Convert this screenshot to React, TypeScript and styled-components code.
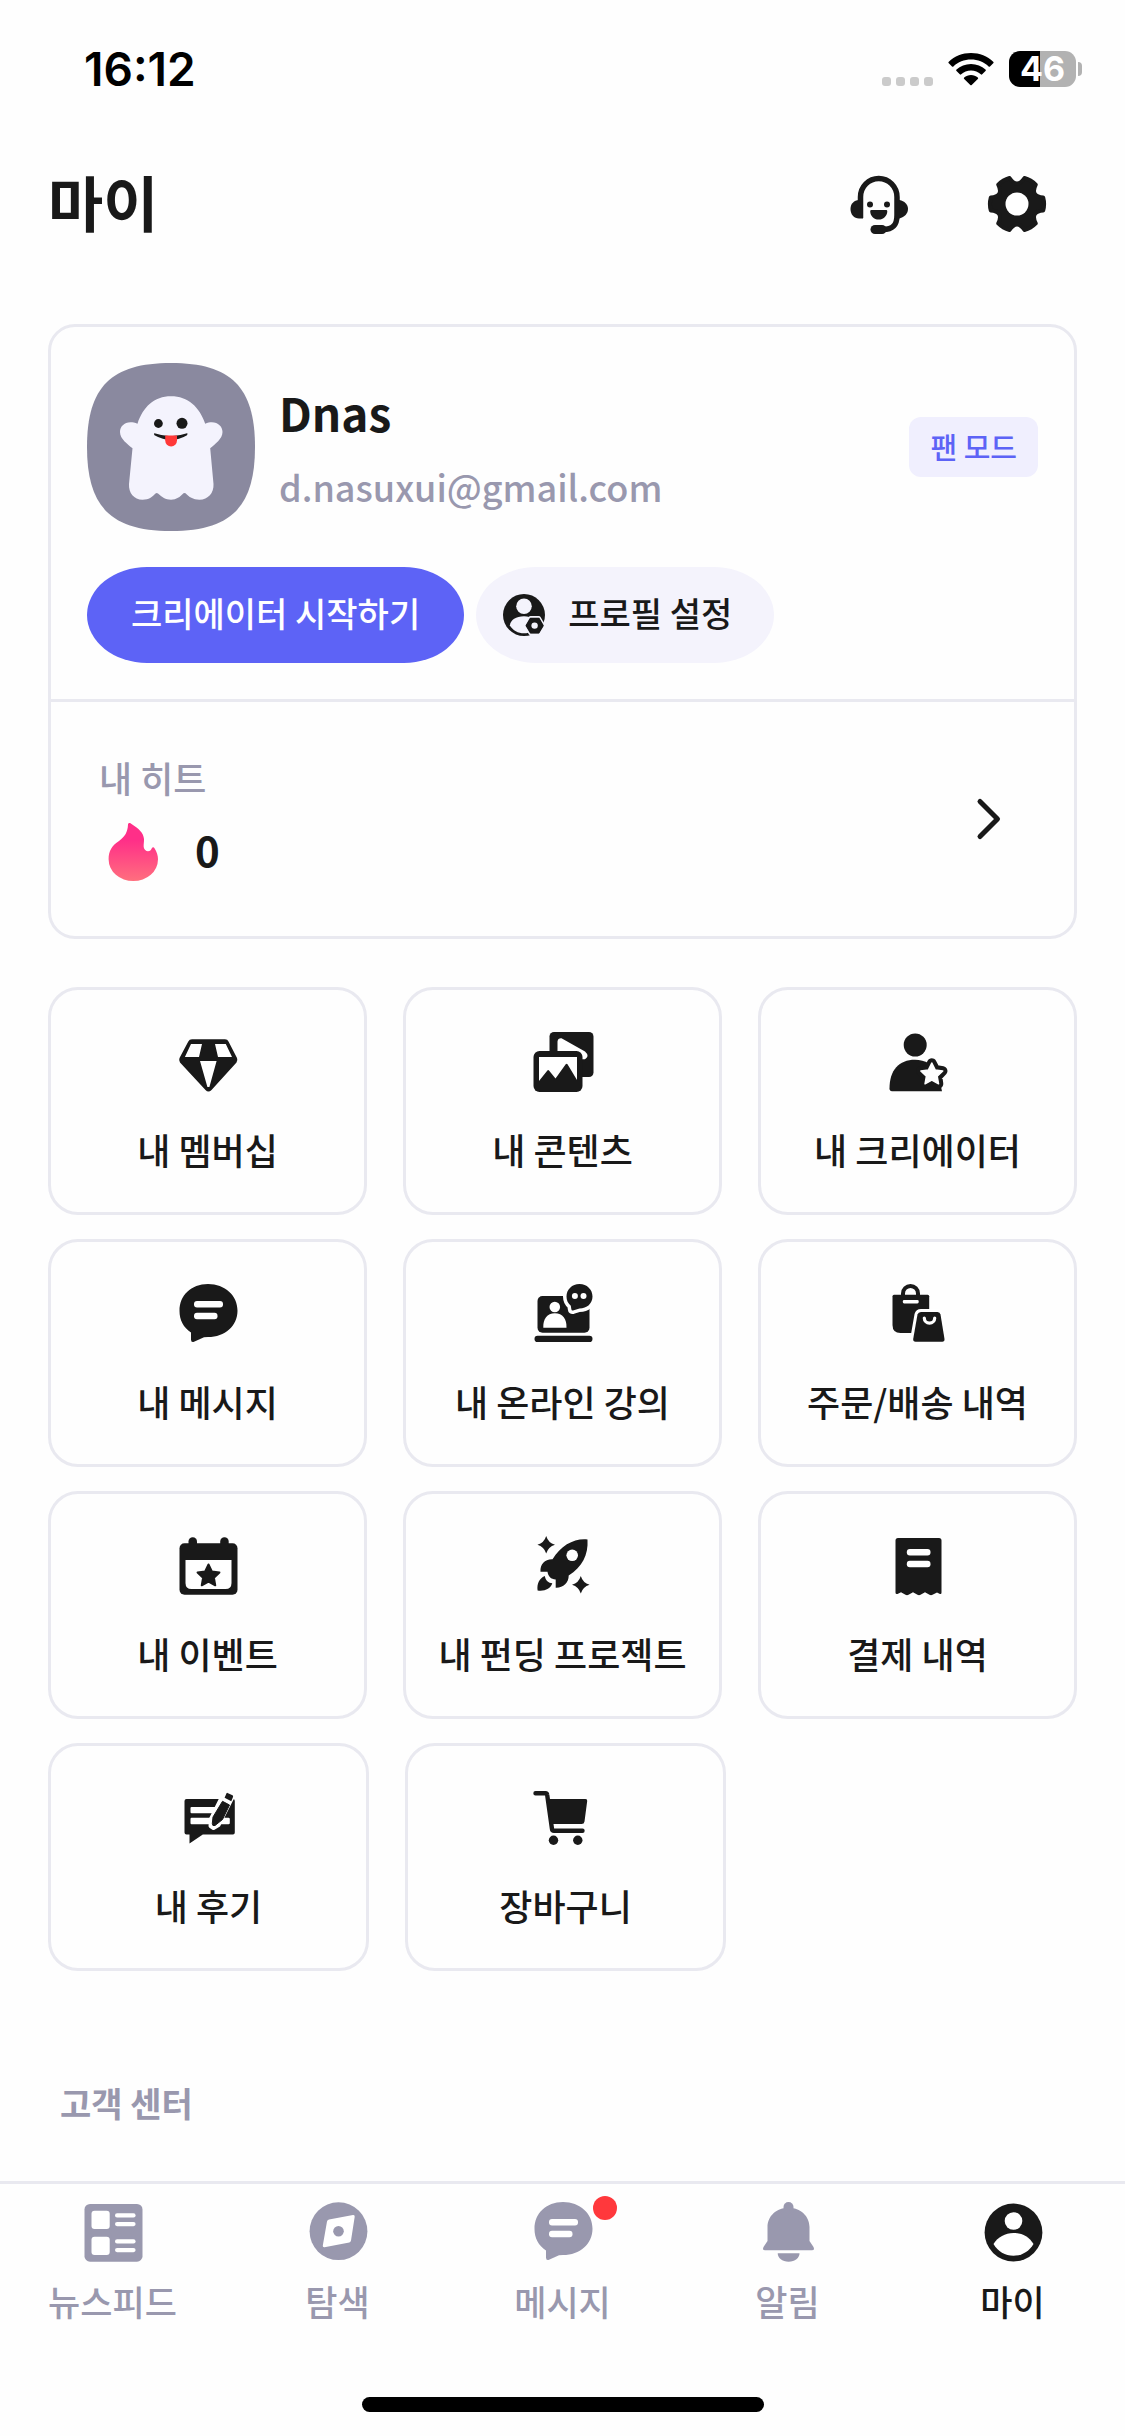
import React from "react";
import styled, { createGlobalStyle } from "styled-components";

const ink = "#191919";
const muted = "#9998AE";
const line = "#E9E9F0";
const primary = "#5D63F6";

const GlobalStyle = createGlobalStyle`
  *, *::before, *::after { box-sizing: border-box; }
  body {
    margin: 0;
    background: #FEFEFE;
    color: ${ink};
    font-family: "Noto Sans CJK KR", "Noto Sans", sans-serif;
    font-weight: 500;
    -webkit-font-smoothing: antialiased;
  }
  h1, h2, p { margin: 0; }
  button { font: inherit; color: inherit; border: 0; background: none; padding: 0; cursor: pointer; }
  a { color: inherit; text-decoration: none; }
  svg { display: block; flex: none; }
`;

/* ---------- layout ---------- */

const Page = styled.div`
  min-height: 100vh;
  display: flex;
  flex-direction: column;
`;

const StatusBar = styled.div`
  display: flex;
  align-items: center;
  justify-content: space-between;
  height: 132px;
  padding: 6px 43px 0 84px;
  color: #000;
  font-family: Inter, sans-serif;
`;

const Clock = styled.time`
  font-size: 46px;
  font-weight: 600;
  line-height: 54px;
`;

const StatusIcons = styled.div`
  display: flex;
  align-items: center;
  gap: 15px;
`;

const SignalDots = styled.div`
  display: flex;
  gap: 5px;
  padding-top: 24px;
  span {
    width: 9px;
    height: 9px;
    border-radius: 3px;
    background: #CBCBCB;
  }
`;

const Battery = styled.div`
  display: flex;
  align-items: center;
  gap: 2px;
  &::after {
    content: "";
    width: 4px;
    height: 14px;
    border-radius: 0 4px 4px 0;
    background: #B2B2B2;
  }
`;

const BatteryLevel = styled.span`
  width: 67px;
  height: 36px;
  border-radius: 11px;
  background: linear-gradient(90deg, #000 46%, #B2B2B2 46%);
  color: #fff;
  font-size: 34px;
  font-weight: 700;
  line-height: 36px;
  text-align: center;
`;

const Header = styled.header`
  display: flex;
  align-items: center;
  justify-content: space-between;
  height: 144px;
  padding: 0 72px 0 48px;
`;

const Title = styled.h1`
  padding-bottom: 6px;
  font-size: 60px;
  font-weight: 700;
  line-height: 84px;
`;

const HeaderActions = styled.div`
  display: flex;
  gap: 66px;
`;

const Main = styled.main`
  flex: 1;
  padding: 48px 48px 53px;
`;

const ProfileCard = styled.section`
  border: 3px solid ${line};
  border-radius: 27px;
`;

const ProfileTop = styled.div`
  display: flex;
  flex-direction: column;
  gap: 36px;
  padding: 36px;
  border-bottom: 3px solid ${line};
`;

const Identity = styled.div`
  display: flex;
  align-items: center;
  gap: 24px;
`;

const NameBlock = styled.div`
  flex: 1;
  min-width: 0;
  padding-bottom: 2px;
`;

const Name = styled.h2`
  font-size: 46px;
  font-weight: 700;
  line-height: 72px;
`;

const Email = styled.p`
  margin-top: 8px;
  color: ${muted};
  font-size: 36px;
  line-height: 60px;
`;

const Badge = styled.span`
  padding: 5px 21px 7px;
  border-radius: 12px;
  background: #F0EFFE;
  color: ${primary};
  font-size: 29px;
  line-height: 48px;
`;

const Actions = styled.div`
  display: flex;
  gap: 12px;
`;

const Pill = styled.button<{ $filled?: boolean }>`
  display: flex;
  align-items: center;
  gap: 20px;
  height: 96px;
  padding: 0 ${(p) => (p.$filled ? 44 : 42)}px 0 ${(p) => (p.$filled ? 44 : 24)}px;
  border-radius: 60px / 48px;
  background: ${(p) => (p.$filled ? primary : "#F4F3FC")};
  color: ${(p) => (p.$filled ? "#fff" : ink)};
  font-size: 34px;
  line-height: 48px;
`;

const PillLabel = styled.span`
  padding-bottom: 4px;
`;

const HeatRow = styled.a`
  display: flex;
  align-items: center;
  justify-content: space-between;
  height: 234px;
  padding: 0 63px 0 48px;
`;

const HeatLabel = styled.p`
  color: ${muted};
  font-size: 36px;
  line-height: 54px;
`;

const HeatValue = styled.p`
  display: flex;
  align-items: center;
  gap: 24px;
  margin-top: 12px;
  font-size: 42px;
  font-weight: 700;
  line-height: 66px;
  span { padding-bottom: 6px; }
`;

const Menu = styled.nav`
  display: flex;
  flex-direction: column;
  gap: 24px;
  margin-top: 48px;
`;

const MenuRow = styled.div`
  display: flex;
  gap: 36px;
`;

const Tile = styled.a<{ $share?: string }>`
  flex: ${(p) => (p.$share ? `0 0 ${p.$share}` : "1 1 0")};
  display: flex;
  flex-direction: column;
  align-items: center;
  gap: 24px;
  height: 228px;
  padding-top: 36px;
  border: 3px solid ${line};
  border-radius: 30px;
  font-size: 36px;
  line-height: 54px;
  white-space: nowrap;
`;

const SectionTitle = styled.h2`
  margin-top: 108px;
  padding-left: 12px;
  color: ${muted};
  font-size: 34px;
  font-weight: 700;
  line-height: 48px;
`;

const TabBar = styled.footer`
  border-top: 3px solid ${line};
  padding: 12px 0 24px;
`;

const Tabs = styled.nav`
  display: flex;
`;

const Tab = styled.a<{ $active?: boolean }>`
  flex: 1 1 0;
  display: flex;
  flex-direction: column;
  align-items: center;
  gap: 6px;
  color: ${(p) => (p.$active ? ink : muted)};
  font-size: 35px;
  line-height: 54px;
`;

const TabIcon = styled.span`
  position: relative;
`;

const UnreadDot = styled.span`
  position: absolute;
  top: 0;
  right: -18px;
  width: 24px;
  height: 24px;
  border-radius: 50%;
  background: #FF383C;
`;

const HomeIndicator = styled.div`
  width: 402px;
  height: 15px;
  margin: 69px auto 0;
  border-radius: 8px;
  background: #000;
`;

/* ---------- drawings ---------- */

const polar = (cx: number, cy: number, r: number, deg: number) => {
  const a = (deg * Math.PI) / 180;
  return `${(cx + r * Math.cos(a)).toFixed(2)} ${(cy + r * Math.sin(a)).toFixed(2)}`;
};

const star = (cx: number, cy: number, outer: number, inner: number) =>
  "M" +
  Array.from({ length: 10 }, (_, i) => polar(cx, cy, i % 2 ? inner : outer, -90 + i * 36)).join("L") +
  "Z";

const sparkle = (cx: number, cy: number, r: number) =>
  `M${cx} ${cy - r}Q${cx + 2} ${cy - 2} ${cx + r} ${cy}Q${cx + 2} ${cy + 2} ${cx} ${cy + r}Q${cx - 2} ${cy + 2} ${cx - r} ${cy}Q${cx - 2} ${cy - 2} ${cx} ${cy - r}Z`;

const gear = Array.from({ length: 6 }, (_, k) => {
  const a = k * 60;
  return `${k ? "L" : "M"}${polar(36, 36, 27, a - 14)}Q${polar(36, 36, 28, a)} ${polar(36, 36, 27, a + 14)}Q${polar(36, 36, 15, a + 30)} ${polar(36, 36, 27, a + 46)}`;
}).join("") + "Z";

const Icon = ({ children, size = 72 }: { children: React.ReactNode; size?: number }) => (
  <svg width={size} height={size} viewBox={`0 0 ${size} ${size}`} fill="currentColor" aria-hidden="true">
    {children}
  </svg>
);

const Wifi = () => (
  <svg width="46" height="34" viewBox="0 0 46 34" aria-hidden="true">
    <path d="M23 1C14.300 1 6.500 4.300 0.800 9.700a1 1 0 0 0 0 1.500L4 14.400a1 1 0 0 0 1.400 0C10 10.200 16.200 7.600 23 7.600s13 2.600 17.600 6.800a1 1 0 0 0 1.400 0l3.200-3.200a1 1 0 0 0 0-1.500C39.500 4.300 31.700 1 23 1Z" />
    <path d="M23 12c-5.600 0-10.700 2.100-14.500 5.600a1 1 0 0 0 0 1.500l3.300 3.200a1 1 0 0 0 1.400 0c2.600-2.300 6-3.700 9.800-3.700s7.200 1.400 9.800 3.700a1 1 0 0 0 1.400 0l3.300-3.200a1 1 0 0 0 0-1.500C33.700 14.100 28.600 12 23 12Z" />
    <path d="M23 23c-2.600 0-5 .9-6.800 2.500a1 1 0 0 0 0 1.500l6.100 6a1 1 0 0 0 1.400 0l6.100-6a1 1 0 0 0 0-1.500C28 23.900 25.600 23 23 23Z" />
  </svg>
);

const HeadsetIcon = () => (
  <Icon>
    <path d="M17.500 50V29a18 18.300 0 0 1 36.500 0V47C54 57 50 61.500 40 61.500" fill="none" stroke="currentColor" strokeWidth="5.500" />
    <path d="M20 32v18.500h-4C11 50.500 7.500 46.500 7.500 41S11 32.500 16 32Z" />
    <path d="M54 32h2.500C61.500 33 65 36.500 65 41s-3.500 8-8.500 9.500H54Z" />
    <rect x="27.500" y="57" width="16" height="9" rx="4.500" />
    <circle cx="27" cy="36.500" r="3" />
    <circle cx="44" cy="36.500" r="3" />
    <path d="M28.500 42h14.500a1.300 1.300 0 0 1 1.300 1.400C44 48 40.500 51.500 35.700 51.500S27.500 48 27.200 43.400A1.300 1.300 0 0 1 28.500 42Z" />
  </Icon>
);

const GearIcon = () => (
  <Icon>
    <path d={gear} stroke="currentColor" strokeWidth="4" strokeLinejoin="round" />
    <circle cx="36" cy="36" r="11.500" fill="#fff" />
  </Icon>
);

const Avatar = () => (
  <svg width="168" height="168" viewBox="0 0 168 168" role="img" aria-label="Dnas">
    <path d="M0 84C0 24 24 0 84 0S168 24 168 84 144 168 84 168 0 144 0 84Z" fill="#8A899F" />
    <path
      d="M84 33.300C101 33.300 112.500 44 118.200 60.700C128 56.500 135.500 62 135.500 69C135.500 76 128 81 123.200 85.300L126.500 121C127 130 121 136.700 112.500 136.700C106 136.700 102 134 98.500 130.300Q97.500 129.500 96.500 130.300C93 134 89.500 136.700 84 136.700S75 134 71 130.500Q69.700 129.500 68.500 130.500C65 134 62 136.700 55.500 136.700C47 136.700 41.500 130 42 121L45.500 85.300C40.500 81 33 76 33 69C33 62 40 56.500 50.500 60.700C56 44 67 33.300 84 33.300Z"
      fill="#F4F3FD"
    />
    <circle cx="71.400" cy="60.500" r="4.400" fill={ink} />
    <circle cx="95" cy="60.300" r="5.500" fill={ink} />
    <path d="M67.500 70.300Q84 76 100 70.300Q101.200 70.500 100 72.200Q92 77 84 77T67.500 72.200Q66.300 70.500 67.500 70.300Z" fill={ink} />
    <path d="M78.200 72.500H90V77.500A5.900 5.900 0 0 1 78.200 77.500Z" fill="#FF3838" />
  </svg>
);

const ProfileIcon = () => (
  <Icon size={48}>
    <circle cx="24" cy="24" r="21" />
    <circle cx="24" cy="15.300" r="7.800" fill="#F4F3FC" />
    <path d="M9.800 34.500C10.500 29 16 25.300 24 25.300S37 29 38 34.500C35 39.500 30 42.300 24 42.300S13 39.500 9.800 34.500Z" fill="#F4F3FC" />
    <path d="M30.500 27h8.300l4.400 7.600-4.400 7.600h-8.300l-4.400-7.600Z" fill={ink} stroke="#F4F3FC" strokeWidth="4" strokeLinejoin="round" paintOrder="stroke" />
    <path d="M30.500 27.500h8.300l4.200 7.100-4.200 7.100h-8.300l-4.200-7.100Z" fill={ink} stroke={ink} strokeWidth="1.500" strokeLinejoin="round" />
    <circle cx="34.600" cy="34.600" r="3.200" fill="#F4F3FC" />
  </Icon>
);

const Flame = () => (
  <svg width="72" height="72" viewBox="0 0 72 72" aria-hidden="true">
    <defs>
      <linearGradient id="flame" x1="0" y1="0" x2="0" y2="1">
        <stop offset="0.300" stopColor="#FF2F88" />
        <stop offset="1" stopColor="#FF6F7E" />
      </linearGradient>
    </defs>
    <path
      d="M29 8.500C29 7 30.500 6.500 31.800 7.400C40 12.500 44.600 17 45 23C45.100 26 44.500 28.500 44.700 31C45 33.700 47 35.200 49 35.200C51 35.200 52 34 52.800 32.200C53.500 30.800 54.800 30.800 55.500 32.200C57.800 36 59 39.500 59 43.300A24.700 21.800 0 0 1 9.600 43.300C9.600 35 13 29.500 20 25C26 20.500 28.700 16 29 8.500Z"
      fill="url(#flame)"
    />
  </svg>
);

const Chevron = () => (
  <svg width="48" height="48" viewBox="0 0 48 48" fill="none" stroke={ink} strokeWidth="5" strokeLinecap="round" strokeLinejoin="round" aria-hidden="true">
    <path d="M17 6.500 34.500 24 17 41.500" />
  </svg>
);

const DiamondIcon = () => (
  <Icon>
    <path d="M20 13.300H53Q55.500 13.300 56.500 15.500L65 32Q66 34.500 64.500 36.500L39.500 64Q36.400 67 33.500 64L8 36.500Q6.500 34.500 7.500 32L16.300 15.500Q17.400 13.300 20 13.300Z" />
    <path d="M19 18H30L27 31H12.900ZM43 18H53.800L60 31H46ZM28 35H44.600L37.400 61H35.400Z" fill="#fff" />
  </Icon>
);

const PicturesIcon = () => (
  <Icon>
    <rect x="22.500" y="6" width="44" height="45" rx="4.500" />
    <path d="M30.500 26V15.500Q31 12 34.500 12.300L58 25.500Q63 30 58 33.300H54V27Z" fill="#fff" />
    <rect x="6.500" y="25" width="49" height="41" rx="6" />
    <path d="M12 31H50V54L40.500 38.300Q39.700 37 38.700 38.300L28.500 52.500 22 44.500Q21.200 43.500 20.400 44.500L12 55Z" fill="#fff" />
  </Icon>
);

const CreatorIcon = () => (
  <Icon>
    <circle cx="33.200" cy="19" r="11.500" />
    <path d="M7.500 62.500C7.500 44 17 33.700 33 33.700C43 33.700 52 39 56 47L60 65.300H10Q7.500 65.300 7.500 62.500Z" />
    <path d={star(49.800, 48.500, 11.500, 6)} stroke="currentColor" strokeWidth="9.500" strokeLinejoin="round" />
    <path d={star(49.800, 48.500, 11.500, 5.700)} fill="#fff" stroke="#fff" strokeWidth="1.500" strokeLinejoin="round" />
  </Icon>
);

const bubble = "M36 6C53 6 65.500 17.500 65.500 32.700S53 59 36 59Q34 59 32 59.300L22 63.800Q19 64.800 19 61.500V54.500C11.500 49.500 7.500 42 7.500 32.700C7.500 17.500 19 6 36 6Z";

const MessageIcon = () => (
  <Icon>
    <path d={bubble} />
    <rect x="22" y="23" width="29" height="6.500" rx="3" fill="#fff" />
    <rect x="22" y="34.700" width="23.500" height="6.500" rx="3" fill="#fff" />
  </Icon>
);

const talk = "M52.500 6C60 6 65.500 11.500 65.500 18.500S60 30.500 52.500 30.500L46 32.500Q44.500 32.800 44.300 31L43.800 27.700C41 25.500 39.500 22.300 39.500 18.500C39.500 11.500 45 6 52.500 6Z";

const LectureIcon = () => (
  <Icon>
    <rect x="10.500" y="18" width="52" height="36.700" rx="5" />
    <rect x="7.500" y="57.700" width="58" height="6.300" rx="3.100" />
    <circle cx="27.800" cy="29" r="5.300" fill="#fff" />
    <path d="M16.300 49.700C16 41 20 35.300 27.900 35.300S39.700 41 39.500 49.700Z" fill="#fff" />
    <path d={talk} fill="#fff" stroke="#fff" strokeWidth="7" strokeLinejoin="round" />
    <path d={talk} />
    <circle cx="47.900" cy="18" r="3" fill="#fff" />
    <circle cx="56.500" cy="18" r="3" fill="#fff" />
  </Icon>
);

const miniBag = "M39 34H55.500Q58 34 58.500 36.500L62.500 61Q62.700 63.800 60.300 63.800H33.500Q31 63.800 31.200 61L35.500 36.500Q36.200 34 39 34Z";

const BagsIcon = () => (
  <Icon>
    <path d="M21 18.500V15.500a7.500 7.500 0 0 1 15 0V18.500" fill="none" stroke="currentColor" strokeWidth="4" />
    <path d="M12 16.700H45.700Q47.200 16.700 47.200 18.200V55H18.500Q10.500 55 10.500 47V18.200Q10.500 16.700 12 16.700Z" />
    <rect x="20.800" y="22" width="15.900" height="3.400" rx="1.300" fill="#fff" />
    <path d={miniBag} fill="#fff" stroke="#fff" strokeWidth="6" strokeLinejoin="round" />
    <path d={miniBag} />
    <path d="M42.300 40a5.100 5.100 0 0 0 10.400 0" fill="none" stroke="#fff" strokeWidth="3.200" strokeLinecap="round" />
  </Icon>
);

const CalendarIcon = () => (
  <Icon>
    <rect x="7.500" y="13.300" width="58" height="51.500" rx="5" />
    <rect x="16.500" y="7.200" width="8.500" height="12" rx="4.200" />
    <rect x="48.200" y="7.200" width="8.500" height="12" rx="4.200" />
    <path d="M13.500 30H59.500V53Q59.500 59 53.500 59H19.500Q13.500 59 13.500 53Z" fill="#fff" />
    <path d={star(36.500, 46, 11.500, 5.700)} stroke="currentColor" strokeWidth="2" strokeLinejoin="round" />
  </Icon>
);

const RocketIcon = () => (
  <Icon>
    <path d={sparkle(19.200, 14.700, 8.800)} />
    <path d={sparkle(53.800, 54.700, 8.800)} />
    <path d="M60.500 9.500C48 8 34 15 25.500 29.300C18 29 13 34 13.500 41.700H20.500C21 46 24 49.300 28.700 49.500V57.700C36 58 41.800 53 41.700 45.500C55 37 61.500 25 60.500 9.500Z" />
    <circle cx="45.200" cy="25.300" r="5.800" fill="#fff" />
    <path d="M17.800 46C12 48.500 9.800 54 10.600 60.500C17.500 61.500 23.500 59 25.300 53.300C21.500 53 18.500 50.500 17.800 46Z" />
  </Icon>
);

const ReceiptIcon = () => (
  <Icon>
    <path d="M16 8H57Q59.500 8 59.500 10.500V62.500Q59.500 64.500 58 64L55 62.500 50.500 64.800Q49 65.500 47.500 64.800L43 62.300 38.500 64.800Q37 65.500 35.500 64.800L31 62.300 26.500 64.800Q25 65.500 23.500 64.800L19 62.300 15.500 64Q13.500 64.500 13.500 62.500V10.500Q13.500 8 16 8Z" />
    <rect x="24.800" y="19" width="23.700" height="6.500" rx="3" fill="#fff" />
    <rect x="24.800" y="30.700" width="23.700" height="6.500" rx="3" fill="#fff" />
  </Icon>
);

const shaft = "M49.500 19.300 56.500 23 49.500 37.500 42 43.500Q39.300 44.500 39.300 41.500L40 35Z";
const cap = "M54.500 10.900 59.500 13.200Q60.500 13.800 60 15L58.300 19.200 51.600 15.700 53.400 11.500Q53.800 10.700 54.500 10.900Z";

const ReviewIcon = () => (
  <Icon>
    <path d="M13.500 17H60Q61.800 17 61.800 19V50.500Q61.800 52.400 60 52.400H29.800L16.500 61.500V52.400H13.500Q11.500 52.400 11.500 50.500V19Q11.500 17 13.500 17Z" />
    <path d="M18.500 25H44V31.300H18.500Q17.500 31.300 17.500 30V26Q17.500 25 18.500 25ZM18.500 35.700H55.500Q56.800 35.700 56.800 37V41Q56.800 42.300 55.500 42.300H18.500Q17.500 42.300 17.500 41V37Q17.500 35.700 18.500 35.700Z" fill="#fff" />
    <path d="M59.500 15 45.500 43 40.500 46 37.500 44 38 37 50.500 12Z" fill="#fff" stroke="#fff" strokeWidth="4" strokeLinejoin="round" />
    <path d={shaft} stroke="currentColor" strokeWidth="1" strokeLinejoin="round" />
    <path d={cap} />
  </Icon>
);

const CartIcon = () => (
  <Icon>
    <path d="M5.500 11.300H15.500Q17 11.300 17.200 13L22 47Q22.200 48.800 24 48.800H52.500" fill="none" stroke="currentColor" strokeWidth="4.400" strokeLinecap="round" />
    <path d="M18 17H55.500Q57.500 17 57.200 19L54.500 39.500Q54.200 42 51.500 42H22Z" />
    <circle cx="23.500" cy="58.300" r="4.700" />
    <circle cx="47.800" cy="58.300" r="4.700" />
  </Icon>
);

const FeedIcon = () => (
  <Icon>
    <rect x="7.500" y="8" width="58" height="57.700" rx="5.500" />
    <g fill="#fff">
      <rect x="14.500" y="14.700" width="18.200" height="18.300" rx="3" />
      <rect x="14.500" y="40.700" width="18.200" height="18.300" rx="3" />
      <rect x="38" y="17.300" width="20.600" height="4.200" rx="2.100" />
      <rect x="38" y="26" width="20.600" height="4.200" rx="2.100" />
      <rect x="38" y="43.300" width="20.600" height="4.200" rx="2.100" />
      <rect x="38" y="52" width="20.600" height="4.200" rx="2.100" />
    </g>
  </Icon>
);

const ExploreIcon = () => (
  <Icon>
    <circle cx="36.500" cy="35.200" r="28.900" />
    <path d="M27 23.500 51 19Q53 18.800 52.700 20.700L49 44.500Q48.700 46 47.300 46.400L22.500 51.300Q20.500 51.500 20.800 49.500L25 25.500Q25.300 24 27 23.500Z" fill="#fff" />
    <circle cx="36.500" cy="35.300" r="5.300" />
  </Icon>
);

const BellIcon = () => (
  <Icon>
    <rect x="31.500" y="6" width="10" height="14" rx="5" />
    <path d="M36.500 11.700C48.500 11.700 57.500 20 57.500 31V45L61.500 51Q63 54.300 60 54.300H13Q10 54.300 11.500 51L15.500 45V31C15.500 20 24.500 11.700 36.500 11.700Z" />
    <path d="M25.700 57.200H47.500C47.500 62 43 65.700 36.600 65.700S25.700 62 25.700 57.200Z" />
  </Icon>
);

const MeIcon = () => (
  <Icon>
    <circle cx="36.500" cy="36.500" r="28.900" />
    <circle cx="36.500" cy="25" r="8.800" fill="#fff" />
    <path d="M16.500 48C21 41 28 37 36.500 37S52 41 56.500 48C52 55.500 45 59.700 36.500 59.700S21 55.500 16.500 48Z" fill="#fff" />
  </Icon>
);

/* ---------- content ---------- */

type Item = { label: string; icon: React.ComponentType };

const fullRows: Item[][] = [
  [
    { label: "내 멤버십", icon: DiamondIcon },
    { label: "내 콘텐츠", icon: PicturesIcon },
    { label: "내 크리에이터", icon: CreatorIcon },
  ],
  [
    { label: "내 메시지", icon: MessageIcon },
    { label: "내 온라인 강의", icon: LectureIcon },
    { label: "주문/배송 내역", icon: BagsIcon },
  ],
  [
    { label: "내 이벤트", icon: CalendarIcon },
    { label: "내 펀딩 프로젝트", icon: RocketIcon },
    { label: "결제 내역", icon: ReceiptIcon },
  ],
];

const lastRow: Item[] = [
  { label: "내 후기", icon: ReviewIcon },
  { label: "장바구니", icon: CartIcon },
];

const tabs: (Item & { unread?: boolean; active?: boolean })[] = [
  { label: "뉴스피드", icon: FeedIcon },
  { label: "탐색", icon: ExploreIcon },
  { label: "메시지", icon: MessageIcon, unread: true },
  { label: "알림", icon: BellIcon },
  { label: "마이", icon: MeIcon, active: true },
];

export default function App() {
  return (
    <Page>
      <GlobalStyle />
      <StatusBar>
        <Clock>16:12</Clock>
        <StatusIcons>
          <SignalDots>
            <span />
            <span />
            <span />
            <span />
          </SignalDots>
          <Wifi />
          <Battery>
            <BatteryLevel>46</BatteryLevel>
          </Battery>
        </StatusIcons>
      </StatusBar>

      <Header>
        <Title>마이</Title>
        <HeaderActions>
          <button type="button" aria-label="고객 지원">
            <HeadsetIcon />
          </button>
          <button type="button" aria-label="설정">
            <GearIcon />
          </button>
        </HeaderActions>
      </Header>

      <Main>
        <ProfileCard>
          <ProfileTop>
            <Identity>
              <Avatar />
              <NameBlock>
                <Name>Dnas</Name>
                <Email>d.nasuxui@gmail.com</Email>
              </NameBlock>
              <Badge>팬 모드</Badge>
            </Identity>
            <Actions>
              <Pill type="button" $filled>
                <PillLabel>크리에이터 시작하기</PillLabel>
              </Pill>
              <Pill type="button">
                <ProfileIcon />
                <PillLabel>프로필 설정</PillLabel>
              </Pill>
            </Actions>
          </ProfileTop>
          <HeatRow href="#heat">
            <div>
              <HeatLabel>내 히트</HeatLabel>
              <HeatValue>
                <Flame />
                <span>0</span>
              </HeatValue>
            </div>
            <Chevron />
          </HeatRow>
        </ProfileCard>

        <Menu>
          {fullRows.map((row) => (
            <MenuRow key={row[0].label}>
              {row.map(({ label, icon: Glyph }) => (
                <Tile key={label} href="#menu">
                  <Glyph />
                  {label}
                </Tile>
              ))}
            </MenuRow>
          ))}
          <MenuRow>
            {lastRow.map(({ label, icon: Glyph }) => (
              <Tile key={label} href="#menu" $share="31.2%">
                <Glyph />
                {label}
              </Tile>
            ))}
          </MenuRow>
        </Menu>

        <SectionTitle>고객 센터</SectionTitle>
      </Main>

      <TabBar>
        <Tabs>
          {tabs.map(({ label, icon: Glyph, unread, active }) => (
            <Tab key={label} href="#tab" $active={active} aria-current={active ? "page" : undefined}>
              <TabIcon>
                <Glyph />
                {unread && <UnreadDot />}
              </TabIcon>
              {label}
            </Tab>
          ))}
        </Tabs>
        <HomeIndicator />
      </TabBar>
    </Page>
  );
}
